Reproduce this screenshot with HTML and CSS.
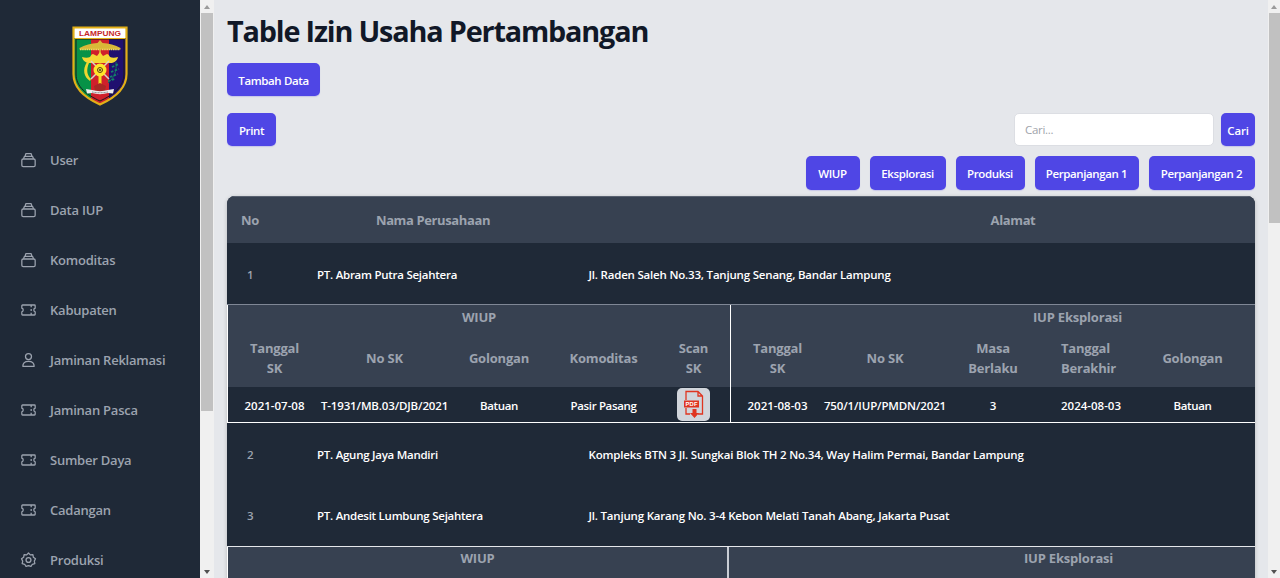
FILE: index.html
```html
<!DOCTYPE html>
<html lang="id">
<head>
<meta charset="utf-8">
<title>Table Izin Usaha Pertambangan</title>
<link rel="stylesheet" href="styles.css">
</head>
<body>
<svg class="defs" width="0" height="0">
  <symbol id="archive" viewBox="0 0 24 24"><rect x="2" y="10.500" width="20" height="11.500" rx="2"/><path d="M4.500 10 6 6.500h12l1.500 3.500M7 6 8 2.500h8L17 6"/></symbol>
  <symbol id="ticket" viewBox="0 0 24 24"><path d="M3 4.500h18a1 1 0 0 1 1 1v3.800a2.800 2.800 0 0 0 0 5.400v3.800a1 1 0 0 1-1 1H3a1 1 0 0 1-1-1v-3.800a2.800 2.800 0 0 0 0-5.400V5.500a1 1 0 0 1 1-1zM16 5v3m0 2.500v3m0 2.500V19"/></symbol>
  <symbol id="person" viewBox="0 0 24 24"><circle cx="12" cy="6.800" r="4.500"/><path d="M3.500 21.500c0-4.500 3.300-7.500 8.500-7.500s8.500 3 8.500 7.500z"/></symbol>
  <symbol id="gear" viewBox="0 0 24 24"><path d="m12 1.500 2.700 2.800 3.900-.2.700 3.800 3.200 2.300-1.800 3.500.8 3.800-3.800.9-2 3.300-3.700-1.400-3.700 1.400-2-3.300-3.800-.9.800-3.800-1.800-3.500 3.200-2.300.7-3.800 3.900.2z"/><circle cx="12" cy="12" r="3.700"/></symbol>
  <symbol id="up" viewBox="0 0 6 4"><path d="M0 4 3 0l3 4z"/></symbol>
  <symbol id="down" viewBox="0 0 6 4"><path d="M0 0h6L3 4z"/></symbol>
</svg>
<div class="app">
  <aside class="sidebar">
    <div class="brand">
      <svg width="56" height="80" viewBox="0 0 56 80">
        <defs><clipPath id="shield"><path d="M2 2h52v46c0 15-12 24-26 30C14 72 2 63 2 48z"/></clipPath></defs>
        <g clip-path="url(#shield)">
          <path fill="#079247" d="M0 0h19v80H0z"/><path fill="#cf202b" d="M19 0h18v80H19z"/><path fill="#20106f" d="M37 0h19v80H37z"/>
          <path fill="#fff" d="M0 0h56v12H0z"/>
        </g>
        <path fill="none" stroke="#1c1a1a" stroke-width="1" d="M4 13h48v35c0 13-11 21-24 27C15 69 4 61 4 48z"/>
        <path fill="none" stroke="#e2af17" stroke-width="2.200" d="M1.500 1.500h53V48c0 15-12 24-26.500 30.500C13.500 72 1.500 63 1.500 48z"/>
        <path stroke="#e2af17" d="M3 12.500h50"/>
        <text x="28" y="9.700" class="brand-text" text-anchor="middle" textLength="42" lengthAdjust="spacingAndGlyphs">LAMPUNG</text>
        <path fill="#d9b838" d="M7.500 22c5-3 12-4.500 18-5l2.500-3 2.500 3c6 .5 13 2 18 5v1.500h-41z"/>
        <path stroke="#f2de62" stroke-width="1.500" stroke-dasharray="1.500 .7" d="M8 23.500h40"/>
        <path stroke="#d9b838" stroke-width="1.500" d="M28 23v5"/>
        <path fill="#f4d834" d="M10 31c3 1 6 1 8 0 1-2 2-3 3-3l4 2 3-4 3 4 4-2c1 0 2 1 3 3 2 1 5 1 8 0-1 4-4 6-8 6H18c-4 0-7-2-8-6z"/>
        <path stroke="#d8d2c8" stroke-width="1.500" d="m19 35 18 18m0-18L19 53"/>
        <path fill="#f2df20" d="M26.500 49h3v12h-3z"/>
        <circle cx="28" cy="44" r="6.500" fill="#ffe52a"/><circle cx="28" cy="44" r="2.500" fill="#f4dd34" stroke="#5c3d10"/><circle cx="28" cy="44" r="1" fill="#333"/>
        <path fill="#efd72f" d="M15 36c-5 8-3 15 3 19l1-2c-4-4-5-9-2-16z"/>
        <path fill="none" stroke="#14705f" stroke-width="1" d="M44 36c1 9-2 16-8 21"/><path stroke="#14856a" stroke-width="1.800" stroke-dasharray="2.500 1.500" d="m40 41 7-3m-8 8 8-3m-9 8 8-3m-10 7 7-2"/>
        <path fill="#a92725" d="m22 60 6-3 6 3-1 5H23z"/>
        <path fill="#eee" d="m14 63 6 1c5 1.500 11 1.500 16 0l6-1-1 4.500-5-.5c-5 1.500-11 1.500-16 0l-5 .5z"/><path stroke="#777" stroke-dasharray="1 .5" d="M20 66q8 1.500 16 0" fill="none"/>
      </svg>
    </div>
    <nav class="menu">
      <a><svg><use href="#archive"/></svg><span>User</span></a>
      <a><svg><use href="#archive"/></svg><span>Data IUP</span></a>
      <a><svg><use href="#archive"/></svg><span>Komoditas</span></a>
      <a><svg><use href="#ticket"/></svg><span>Kabupaten</span></a>
      <a><svg><use href="#person"/></svg><span>Jaminan Reklamasi</span></a>
      <a><svg><use href="#ticket"/></svg><span>Jaminan Pasca</span></a>
      <a><svg><use href="#ticket"/></svg><span>Sumber Daya</span></a>
      <a><svg><use href="#ticket"/></svg><span>Cadangan</span></a>
      <a><svg><use href="#gear"/></svg><span>Produksi</span></a>
    </nav>
  </aside>
  <div class="scrollbar side-scroll"><svg class="dim"><use href="#up"/></svg><i></i><svg><use href="#down"/></svg></div>
  <main class="content">
    <h1>Table Izin Usaha Pertambangan</h1>
    <button class="btn add">Tambah Data</button>
    <div class="tools">
      <button class="btn print">Print</button>
      <div class="search"><input type="text" placeholder="Cari..."><button class="btn find">Cari</button></div>
    </div>
    <div class="filters">
      <button class="btn w1">WIUP</button><button class="btn w2">Eksplorasi</button><button class="btn w3">Produksi</button><button class="btn w4">Perpanjangan 1</button><button class="btn w5">Perpanjangan 2</button>
    </div>
    <section class="table">
      <div class="row head"><b>No</b><b>Nama Perusahaan</b><b>Alamat</b></div>
      <div class="row first"><em>1</em><span>PT. Abram Putra Sejahtera</span><span>Jl. Raden Saleh No.33, Tanjung Senang, Bandar Lampung</span></div>
      <div class="detail">
        <div class="group wiup">
          <b class="title">WIUP</b>
          <b>Tanggal<br>SK</b><b>No SK</b><b>Golongan</b><b>Komoditas</b><b>Scan<br>SK</b>
          <span>2021-07-08</span><span class="code">T-1931/MB.03/DJB/2021</span><span class="word">Batuan</span><span class="word">Pasir Pasang</span>
          <span><a class="pdf"><svg width="21" height="29" viewBox="0 0 21 29"><path fill="none" stroke="#df3520" stroke-width="1.300" d="M3 10V1.500h12L19.500 6v18H15M3 18v6h4M15 1.500V6h4.500"/><path fill="#df3520" d="M1 10.500h15v7H1zM9.500 19h4v4H16l-4.500 5L7 23h2.500z"/><text x="8.700" y="16.200" text-anchor="middle" class="pdf-text">PDF</text></svg></a></span>
        </div>
        <div class="group eksplorasi">
          <b class="title">IUP Eksplorasi</b>
          <b>Tanggal<br>SK</b><b>No SK</b><b>Masa<br>Berlaku</b><b class="left">Tanggal<br>Berakhir</b><b>Golongan</b><b></b>
          <span>2021-08-03</span><span class="code">750/1/IUP/PMDN/2021</span><span>3</span><span>2024-08-03</span><span class="word">Batuan</span><span></span>
        </div>
      </div>
      <div class="row"><em>2</em><span>PT. Agung Jaya Mandiri</span><span>Kompleks BTN 3 Jl. Sungkai Blok TH 2 No.34, Way Halim Permai, Bandar Lampung</span></div>
      <div class="row third"><em>3</em><span>PT. Andesit Lumbung Sejahtera</span><span>Jl. Tanjung Karang No. 3-4 Kebon Melati Tanah Abang, Jakarta Pusat</span></div>
      <div class="detail next">
        <div class="group wiup"><b class="title">WIUP</b></div>
        <div class="group eksplorasi"><b class="title">IUP Eksplorasi</b></div>
      </div>
    </section>
  </main>
  <div class="scrollbar page-scroll"><svg class="dim"><use href="#up"/></svg><i></i><svg><use href="#down"/></svg></div>
</div>
</body>
</html>
```
FILE: styles.css
```css
* { box-sizing: border-box; }
body { margin: 0; height: 578px; overflow: hidden; background: #e5e7eb; font-family: "Open Sans", "Noto Sans", sans-serif; }
.defs { position: absolute; }
.app { display: grid; grid-template-columns: 200px 14px 1fr 12px; height: 578px; overflow: hidden; }
.sidebar { background: #1f2937; overflow: hidden; }
.brand { padding: 26px 0 0 72px; height: 135px; }
.brand svg { display: block; }
.brand-text { font: 700 6.500px "Liberation Sans", sans-serif; fill: #c62828; }
.menu a { display: flex; align-items: center; height: 50px; padding-left: 20px; gap: 14px; color: #9ca3af; font-size: 13px; font-weight: 600; letter-spacing: -.23px; }
.menu svg { width: 17px; height: 16px; margin-right: -1px; fill: none; stroke: #9ca3af; stroke-width: 1.900; stroke-linejoin: round; }
.scrollbar { display: flex; flex-direction: column; align-items: center; background: #f0f0f0; padding: 5px 0 4px; height: 578px; }
.scrollbar svg { width: 6px; height: 4px; flex: none; fill: #505050; }
.scrollbar .dim { fill: #9a9a9a; }
.scrollbar i { width: 12px; background: #c1c1c1; margin: 4px 0 auto; }
.side-scroll { padding-right: 1px; }
.side-scroll i { height: 398px; }
.page-scroll i { height: 210px; width: 11px; }
.content { padding: 11px 13px 0; min-width: 0; overflow: hidden; }
h1 { margin: 0 0 12px; height: 40px; line-height: 40px; font-size: 28.800px; font-weight: 700; letter-spacing: -1.170px; color: #111827; white-space: nowrap; }
.btn { display: block; height: 33px; border: 0; border-radius: 5px; background: #4f46e5; color: #fff; font: 600 11.500px/33px "Open Sans", sans-serif; padding: 1px 0 0; text-align: center; white-space: nowrap; box-shadow: 0 1px 1px rgba(79,70,229,.2); letter-spacing: -.38px; }
.add { width: 93px; }
.tools { display: flex; justify-content: space-between; margin-top: 17px; }
.print { width: 49px; }
.search { display: flex; gap: 7px; }
.search input { width: 200px; height: 33px; padding: 0 10px; border: 1px solid #dcdee3; border-radius: 5px; font: 400 11.500px "Open Sans", sans-serif; letter-spacing: -.3px; background: #fff; }
.search input::placeholder { color: #a0a4ab; }
.find { width: 34px; letter-spacing: -.2px; }
.filters { display: flex; justify-content: flex-end; gap: 10px; margin-top: 10px; }
.filters .btn { height: 34px; padding: 1px 1px 0 0; }
.w1 { width: 54px; } .w2 { width: 76px; } .w3 { width: 69px; } .w4 { width: 104px; } .w5 { width: 106px; }
.table { margin-top: 6px; width: 1028px; background: #1f2937; border-radius: 8px 8px 0 0; overflow: hidden; box-shadow: 0 1px 4px rgba(0,0,0,.2); color: #fff; font-size: 11.500px; font-weight: 600; }
.table b { color: #9ca3af; font-size: 13px; font-weight: 700; line-height: 20px; letter-spacing: -.2px; }
.row { display: grid; grid-template-columns: 90px 271.500px 1fr; align-items: center; height: 61.500px; padding-top: 2px; white-space: nowrap; letter-spacing: -.19px; }
.row em { font-style: normal; color: #9ca3af; padding-left: 20px; }
.row em + span { letter-spacing: -.26px; }
.first { height: 61px; }
.third { padding-top: 0; }
.table .head { height: 47px; background: #374151; grid-template-columns: 46px 320px 840px; border-top: 1px solid #586170; padding-top: 0; }
.table .head b { text-align: center; letter-spacing: -.38px; }
.detail { display: grid; grid-template-columns: 504px 760px; height: 119px; border-top: 1px solid #7f8795; background: #374151; }
.group { display: grid; grid-template-rows: 25px 57px 35px; border-left: 1px solid #fff; border-bottom: 1px solid #fff; white-space: nowrap; }
.wiup { grid-template-columns: 93px 127px 102px 107px 73px; border-right: 1px solid #fff; }
.eksplorasi { grid-template-columns: 93px 122px 94px 102px 101px 200px; border-left: 0; }
.group > * { display: grid; align-content: center; text-align: center; justify-content: center; }
.group > b { padding-bottom: 2px; }
.group > span { background: #1f2937; padding-top: 1px; }
.group .code { letter-spacing: -.14px; }
.group .word { letter-spacing: -.35px; }
.group .title { grid-column: 1 / -1; }
.group .left { text-align: left; justify-content: start; padding-left: 21px; }
.eksplorasi .title { justify-content: start; padding-left: 302px; }
.pdf { display: grid; place-items: center; width: 33px; height: 33px; border-radius: 5px; background: #d1d5db; margin-top: -1px; }
.pdf-text { font: 700 5.800px "Liberation Sans", sans-serif; fill: #fff; letter-spacing: .3px; }
.next { grid-template-columns: 502px 760px; border-top-color: #e5e7eb; }
.next .wiup { grid-template-columns: 1fr; border-right: 2px solid #c9cdd4; }
.next .eksplorasi { grid-template-columns: 1fr; }
.next .group { border-bottom: 0; }
.next .title { padding-bottom: 4px; }
.next .eksplorasi .title { padding-left: 295px; }
```
